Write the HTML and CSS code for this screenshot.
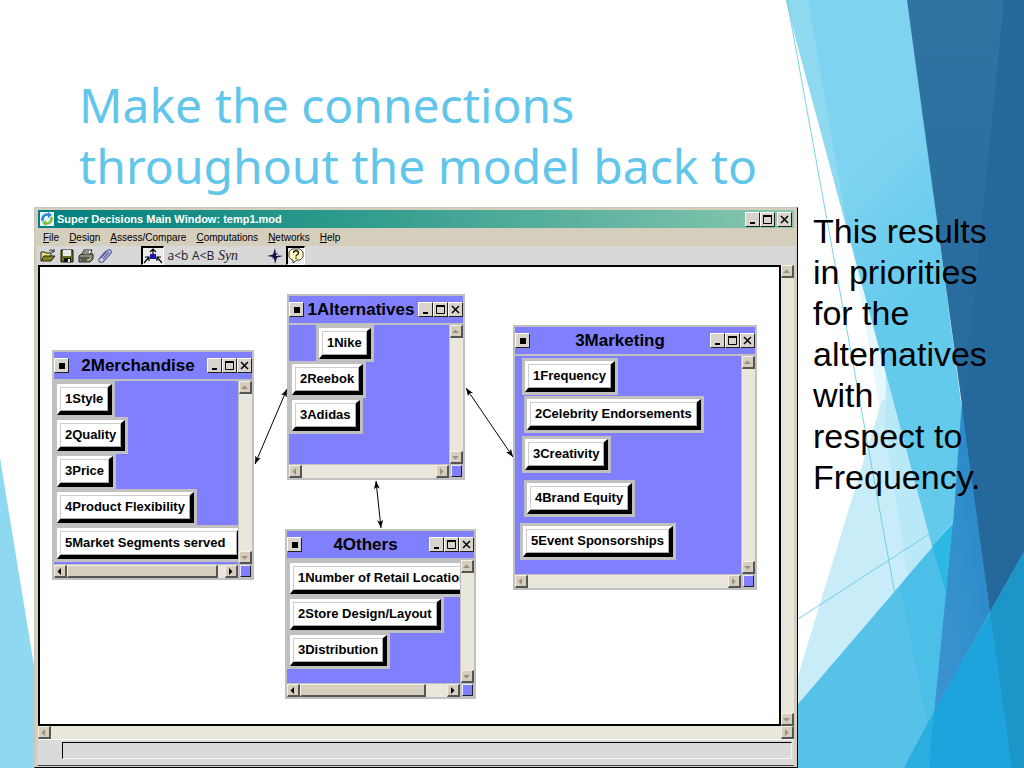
FILE: index.html
```html
<!DOCTYPE html>
<html lang="en">
<head>
  <meta charset="UTF-8" />
  <meta name="viewport" content="width=device-width, initial-scale=1.0" />
  <title>Super Decisions - Make the connections</title>
  <link rel="stylesheet" href="styles.css">
</head>
<body>
  <!-- shared glyphs -->
  <svg class="defs" width="0" height="0" aria-hidden="true">
    <symbol id="min" viewBox="0 0 13 13"><path d="M4 10h5" stroke="#000" stroke-width="2"/></symbol>
    <symbol id="max" viewBox="0 0 13 13"><path d="M2.500 2.500h8v8h-8z" fill="none" stroke="#000"/><path d="M2 3h9" stroke="#000" stroke-width="2"/></symbol>
    <symbol id="close" viewBox="0 0 13 13"><path d="M3 3l7 7M10 3l-7 7" stroke="#000" stroke-width="1.500"/></symbol>
    <symbol id="sys" viewBox="0 0 13 13"><path d="M4 4h6v6H4z"/></symbol>
    <symbol id="up" viewBox="0 0 9 9"><path d="M1 6l3.500-3.500L8 6z"/></symbol>
    <symbol id="down" viewBox="0 0 9 9"><path d="M1 3l3.500 3.500L8 3z"/></symbol>
    <symbol id="left" viewBox="0 0 9 9"><path d="M6 1L2.500 4.500 6 8z"/></symbol>
    <symbol id="right" viewBox="0 0 9 9"><path d="M3 1l3.500 3.500L3 8z"/></symbol>
  </svg>

  <div class="slide">
    <svg class="backdrop" viewBox="0 0 1024 768" preserveAspectRatio="none" aria-hidden="true">
      <defs>
        <linearGradient id="sky" x1="0" y1="0" x2="0.300" y2="1">
          <stop offset="0.400" stop-color="#7dd3f0"/>
          <stop offset="0.700" stop-color="#64caec"/>
        </linearGradient>
        <linearGradient id="mid" x1="1" y1="0" x2="0" y2="1">
          <stop offset="0" stop-color="#2888c8"/>
          <stop offset="1" stop-color="#3c94d0"/>
        </linearGradient>
        <linearGradient id="navy" x1="0" y1="0" x2="0" y2="1">
          <stop offset="0" stop-color="#3074a2"/>
          <stop offset="1" stop-color="#21659a"/>
        </linearGradient>
      </defs>
      <path d="M0 458L34 666 47 768H0z" fill="#8ed8f1"/>
      <path d="M847 220L893 400 872 440 880 410z" fill="#e6f7fd"/>
      <path d="M882 400L798 676V704L954 522 893 400z" fill="#c8edf9"/>
      <path d="M886 372L893 400 932 546 908 578 885 430z" fill="#b9e8f7"/>
      <path d="M786 0H908L962 410 953 522 932 546 893 400 797 43z" fill="url(#sky)"/>
      <path d="M786 0H808L848 233 797 43z" fill="#90daf1"/>
      <path d="M954 522L798 704V768H906L936 712z" fill="#56c2ea"/>
      <path d="M954 522L932 546 946 592z" fill="#2bb8e2"/>
      <path d="M954 522L932 546 946 592 936 712 928 728 900 586 906 578z" fill="#42bce6" opacity="0.500"/>
      <path d="M962 400L990 612 934 714 953 522z" fill="url(#mid)"/>
      <path d="M907 0H1024V552L990 612z" fill="url(#navy)"/>
      <path d="M1004 0H1024V552L990 612 963 415z" fill="#24689c"/>
      <path d="M1024 552L990 612 934 712 904 768H1024z" fill="#1ea4dd"/>
      <path d="M1024 552L990 612 1012 768H1024z" fill="#1c95c8"/>
      <path d="M934 712L904 768H929z" fill="#2cade0"/>
      <path d="M787 0L920 732M798 619L954 518" fill="none" stroke="#5cc6dc" stroke-width="0.800"/>
    </svg>

    <h1>Make the connections<br>throughout the model back to</h1>

    <div class="content">
      <div class="window">
        <div class="titlebar">
          <svg class="logo" viewBox="0 0 14 14"><path d="M0 0h14v14H0z" fill="#e8f4f8"/><path d="M3 9a4.500 4.500 0 0 1 6-6" fill="none" stroke="#2a86d0" stroke-width="2.500"/><path d="M11 5a4.500 4.500 0 0 1-6 6" fill="none" stroke="#7cc142" stroke-width="2.500"/><path d="M8 0l4 3-4 3z" fill="#2a86d0"/><path d="M6 14l-4-3 4-3z" fill="#7cc142"/></svg>
          <span>Super Decisions Main Window: temp1.mod</span>
          <div class="controls">
            <button aria-label="Minimize"><svg><use href="#min"/></svg></button>
            <button aria-label="Maximize"><svg><use href="#max"/></svg></button>
            <button aria-label="Close" class="apart"><svg><use href="#close"/></svg></button>
          </div>
        </div>

        <div class="menu">
          <button><u>F</u>ile</button>
          <button><u>D</u>esign</button>
          <button><u>A</u>ssess/Compare</button>
          <button><u>C</u>omputations</button>
          <button><u>N</u>etworks</button>
          <button><u>H</u>elp</button>
        </div>

        <div class="toolbar">
          <div class="tools">
            <button aria-label="Open"><svg viewBox="0 0 16 16"><path d="M1 13V4h4l1 1h5v3" fill="#e8e070" stroke="#222"/><path d="M1 13l3-5h11l-4 5z" fill="#8a8420" stroke="#222"/><path d="M9 3c2-2 4-1 5 1M14 1v3h-3" fill="none" stroke="#222"/></svg></button>
            <button aria-label="Save"><svg viewBox="0 0 16 16"><path d="M2 2h12v12H2z" fill="#6a6a20" stroke="#111"/><path d="M4 2h8v6H4z" fill="#e8e8e8"/><path d="M5 10h7v4H5z" fill="#111"/><path d="M9 11h2v3H9z" fill="#eee"/></svg></button>
            <button aria-label="Print"><svg viewBox="0 0 16 16"><path d="M4 7l2-5h8l-2 5" fill="#fff" stroke="#222"/><path d="M1 8l2-2h12v5l-3 3H1z" fill="#8a8a78" stroke="#222"/><path d="M2 10h9M6 4h5M3 12h6" stroke="#222"/><path d="M9 11h3v1H9z" fill="#e8e040"/></svg></button>
            <button aria-label="Attach"><svg viewBox="0 0 16 16"><path d="M4 10l7-8c2-1 4 1 3 3l-8 9c-2 1-5 0-4-3l7-8M6 11l6-7" fill="none" stroke="#5a62a8" stroke-width="1.300"/></svg></button>
          </div>
          <div class="tools">
            <button class="pressed wide" aria-label="Connections"><svg viewBox="0 0 20 16"><path d="M10 8V1M7 4l3-3 3 3M1 15l5-6M2 9h4v4M19 15l-5-6M18 9h-4v4" fill="none" stroke="#000" stroke-width="1.200"/><path d="M7 6h6v5H7z" fill="#1818b0"/></svg></button>
            <button class="word">a&lt;b</button>
            <button class="word">A&lt;B</button>
            <button class="word syn">Syn</button>
          </div>
          <div class="tools">
            <button aria-label="Compass"><svg viewBox="0 0 16 16"><path d="M8 0l1 6 2-1-1 2 6 1-6 1.500L8 16 7 10l-2 1 1-2-6-1 6-1.500z" fill="#10104a"/><path d="M9 7h5L9 8z" fill="#fff"/></svg></button>
            <button class="pressed" aria-label="Help"><svg viewBox="0 0 16 16"><path d="M4 1h8l3 3v5l-3 3H9l-4 3v-3H4L1 9V4z" fill="#fffbc0" stroke="#444"/><path d="M5.500 5c0-3 5-3 5 0 0 2-2.500 1.500-2.500 3.500M8 9.500v1.500" fill="none" stroke="#222" stroke-width="1.400"/></svg></button>
          </div>
        </div>

        <div class="workspace">
          <div class="canvas">
            <svg class="links" aria-hidden="true">
              <defs>
                <marker id="arrow" viewBox="0 0 8 6" refX="8" refY="3" markerWidth="8" markerHeight="6" orient="auto-start-reverse"><path d="M0 0l8 3-8 3 2-3z"/></marker>
              </defs>
              <line x1="247" y1="122" x2="215" y2="197"/>
              <line x1="426" y1="121" x2="473" y2="190"/>
              <line x1="336" y1="214" x2="341" y2="261"/>
            </svg>

            <section class="cluster merchandise">
              <header>
                <button aria-label="Menu"><svg><use href="#sys"/></svg></button>
                <h2>2Merchandise</h2>
                <div class="controls">
                  <button aria-label="Minimize"><svg><use href="#min"/></svg></button>
                  <button aria-label="Maximize"><svg><use href="#max"/></svg></button>
                  <button aria-label="Close"><svg><use href="#close"/></svg></button>
                </div>
              </header>
              <div class="nodes">
                <button class="node">1Style</button>
                <button class="node">2Quality</button>
                <button class="node">3Price</button>
                <button class="node">4Product Flexibility</button>
                <button class="node long">5Market Segments served</button>
              </div>
              <div class="vscroll">
                <button aria-label="Scroll up"><svg><use href="#up"/></svg></button>
                <button aria-label="Scroll down"><svg><use href="#down"/></svg></button>
              </div>
              <div class="hscroll live">
                <button aria-label="Scroll left"><svg><use href="#left"/></svg></button>
                <div class="thumb wide"></div>
                <button aria-label="Scroll right"><svg><use href="#right"/></svg></button>
              </div>
              <div class="grip"></div>
            </section>

            <section class="cluster alternatives">
              <header>
                <button aria-label="Menu"><svg><use href="#sys"/></svg></button>
                <h2>1Alternatives</h2>
                <div class="controls">
                  <button aria-label="Minimize"><svg><use href="#min"/></svg></button>
                  <button aria-label="Maximize"><svg><use href="#max"/></svg></button>
                  <button aria-label="Close"><svg><use href="#close"/></svg></button>
                </div>
              </header>
              <div class="nodes">
                <button class="node indent">1Nike</button>
                <button class="node">2Reebok</button>
                <button class="node">3Adidas</button>
              </div>
              <div class="vscroll">
                <button aria-label="Scroll up"><svg><use href="#up"/></svg></button>
                <button aria-label="Scroll down"><svg><use href="#down"/></svg></button>
              </div>
              <div class="hscroll">
                <button aria-label="Scroll left"><svg><use href="#left"/></svg></button>
                <button aria-label="Scroll right"><svg><use href="#right"/></svg></button>
              </div>
              <div class="grip"></div>
            </section>

            <section class="cluster marketing">
              <header>
                <button aria-label="Menu"><svg><use href="#sys"/></svg></button>
                <h2>3Marketing</h2>
                <div class="controls">
                  <button aria-label="Minimize"><svg><use href="#min"/></svg></button>
                  <button aria-label="Maximize"><svg><use href="#max"/></svg></button>
                  <button aria-label="Close"><svg><use href="#close"/></svg></button>
                </div>
              </header>
              <div class="nodes free">
                <button class="node frequency">1Frequency</button>
                <button class="node celebrity">2Celebrity Endorsements</button>
                <button class="node creativity">3Creativity</button>
                <button class="node brand">4Brand Equity</button>
                <button class="node event">5Event Sponsorships</button>
              </div>
              <div class="vscroll">
                <button aria-label="Scroll up"><svg><use href="#up"/></svg></button>
                <button aria-label="Scroll down"><svg><use href="#down"/></svg></button>
              </div>
              <div class="hscroll">
                <button aria-label="Scroll left"><svg><use href="#left"/></svg></button>
                <button aria-label="Scroll right"><svg><use href="#right"/></svg></button>
              </div>
              <div class="grip"></div>
            </section>

            <section class="cluster others">
              <header>
                <button aria-label="Menu"><svg><use href="#sys"/></svg></button>
                <h2>4Others</h2>
                <div class="controls">
                  <button aria-label="Minimize"><svg><use href="#min"/></svg></button>
                  <button aria-label="Maximize"><svg><use href="#max"/></svg></button>
                  <button aria-label="Close"><svg><use href="#close"/></svg></button>
                </div>
              </header>
              <div class="nodes">
                <button class="node">1Number of Retail Locations</button>
                <button class="node">2Store Design/Layout</button>
                <button class="node">3Distribution</button>
              </div>
              <div class="vscroll">
                <button aria-label="Scroll up"><svg><use href="#up"/></svg></button>
                <button aria-label="Scroll down"><svg><use href="#down"/></svg></button>
              </div>
              <div class="hscroll live">
                <button aria-label="Scroll left"><svg><use href="#left"/></svg></button>
                <div class="thumb"></div>
                <button aria-label="Scroll right"><svg><use href="#right"/></svg></button>
              </div>
              <div class="grip"></div>
            </section>
          </div>
          <div class="vscroll">
            <button aria-label="Scroll up"><svg><use href="#up"/></svg></button>
            <button aria-label="Scroll down"><svg><use href="#down"/></svg></button>
          </div>
          <div class="hscroll">
            <button aria-label="Scroll left"><svg><use href="#left"/></svg></button>
            <button aria-label="Scroll right"><svg><use href="#right"/></svg></button>
          </div>
        </div>

        <div class="statusbar"><div class="status"></div></div>
      </div>

      <p class="note">This results in priorities for the alternatives with respect to Frequency.</p>
    </div>
  </div>
</body>
</html>
```
FILE: styles.css
```css
* {
  box-sizing: border-box;
}
body {
  margin: 0;
  font-family: "Liberation Sans", Arial, sans-serif;
  background: #fff;
  color: #000;
}
button {
  padding: 0;
  margin: 0;
  font: inherit;
  color: inherit;
}
svg {
  display: block;
}
.defs {
  position: absolute;
}
.slide {
  position: relative;
  min-height: 100vh;
  display: flex;
  flex-direction: column;
  overflow: hidden;
}
.backdrop {
  position: absolute;
  top: 0;
  left: 0;
  width: 100%;
  height: 100%;
}
h1 {
  position: relative;
  margin: 0;
  padding: 74px 0 11px 79px;
  font-family: "Noto Sans", "Trebuchet MS", sans-serif;
  font-size: 48px;
  font-weight: 400;
  line-height: 61px;
  color: #62c6ea;
}
.content {
  position: relative;
  flex: 1;
  display: flex;
  padding-left: 34px;
}
.note {
  width: 226px;
  margin: 0;
  padding: 4px 32px 0 15px;
  font-size: 34px;
  line-height: 41px;
}

/* main window */
.window {
  flex: 1;
  min-width: 0;
  display: flex;
  flex-direction: column;
  padding: 2px 2px 1px;
  background: #d6cebd;
  border: 1px solid #c8c4b8;
  border-right-color: #000;
  border-bottom-color: #000;
}
.titlebar {
  display: flex;
  align-items: center;
  gap: 3px;
  height: 18px;
  margin: 0 1px;
  padding: 0 2px;
  background: linear-gradient(90deg, #008080, #2d9a8c 40%, #88c8b0);
  color: #fff;
  font-size: 11px;
  font-weight: bold;
}
.logo {
  width: 14px;
  height: 14px;
}
.controls {
  display: flex;
  margin-left: auto;
}
.controls button, .cluster header > button {
  width: 15px;
  height: 15px;
  background: #d8d4cc;
  border: 1px solid #fff;
  border-right-color: #222;
  border-bottom-color: #222;
}
.controls svg, .cluster header svg {
  width: 13px;
  height: 13px;
}
.titlebar .apart {
  margin-left: 2px;
}
.menu {
  display: flex;
  align-items: center;
  gap: 10px;
  height: 18px;
  padding-left: 6px;
  font-size: 10px;
}
.menu button, .tools button {
  background: none;
  border: none;
}
.toolbar {
  display: flex;
  align-items: center;
  gap: 28px;
  height: 19px;
  padding-left: 3px;
  background: #d8d8d8;
}
.tools {
  display: flex;
  align-items: center;
  gap: 3px;
}
.tools svg {
  width: 16px;
  height: 16px;
}
.tools .word {
  width: 22px;
  font-family: "Open Sans", sans-serif;
  font-size: 12px;
  line-height: 16px;
  color: #222;
}
.tools .syn {
  font-family: "Liberation Serif", serif;
  font-style: italic;
  font-size: 14px;
}
.tools .pressed {
  background: #ececec;
  border: 1px solid #fff;
  border-top: 2px solid #000;
  border-left: 2px solid #000;
}
.pressed.wide svg {
  width: 20px;
}

.workspace {
  flex: 1;
  display: grid;
  grid-template-columns: 1fr 13px;
  grid-template-rows: minmax(461px, 1fr) 13px;
  padding: 0 1px;
}
.canvas {
  position: relative;
  overflow: hidden;
  background: #fff;
  border: 2px solid #000;
}
.statusbar {
  height: 27px;
  margin: 0 1px;
  padding: 2px 2px 6px 24px;
  background: #dadada;
  border-top: 1px solid #fff;
  border-bottom: 1px solid #444;
}
.status {
  height: 100%;
  border: 1px solid #f4f4f4;
  border-top-color: #000;
  border-left-color: #000;
}

/* scroll bars */
.vscroll, .hscroll {
  display: flex;
  justify-content: space-between;
  background: #e9e6dc;
}
.vscroll {
  flex-direction: column;
}
.hscroll {
  grid-column: 1 / 3;
}
.vscroll button, .hscroll button {
  flex: none;
  width: 13px;
  height: 13px;
  background: #d6cebd;
  border: 1px solid #f4f0e4;
  border-right: 2px solid #555;
  border-bottom: 2px solid #555;
  fill: #9a917c;
}
.vscroll svg, .hscroll svg {
  width: 9px;
  height: 9px;
}
.hscroll.live button {
  fill: #000;
}
.thumb {
  width: 126px;
  margin-right: auto;
  background: #d6cebd;
  border: 1px solid #f4f0e4;
  border-right: 2px solid #555;
  border-bottom: 2px solid #555;
}
.thumb.wide {
  width: 151px;
}

/* clusters on the canvas */
.links {
  position: absolute;
  width: 100%;
  height: 100%;
}
.links line {
  stroke: #000;
  marker-start: url(#arrow);
  marker-end: url(#arrow);
}
.cluster {
  position: absolute;
  display: grid;
  grid-template-columns: minmax(0, 1fr) 13px;
  grid-template-rows: 29px minmax(0, 1fr) 14px;
  background: #c0c0c0;
  border: 2px solid #c0c0c0;
}
.merchandise {
  left: 12px;
  top: 83px;
  width: 202px;
  height: 230px;
}
.alternatives {
  left: 247px;
  top: 27px;
  width: 178px;
  height: 186px;
}
.marketing {
  left: 473px;
  top: 58px;
  width: 244px;
  height: 265px;
}
.others {
  left: 245px;
  top: 262px;
  width: 191px;
  height: 170px;
}
.cluster header {
  grid-column: 1 / 3;
  display: flex;
  align-items: center;
  margin-bottom: 2px;
  background: #8080ff;
}
.cluster h2 {
  flex: 1;
  margin: 0;
  font-size: 17px;
  line-height: 20px;
  text-align: center;
  white-space: nowrap;
}
.nodes {
  position: relative;
  display: flex;
  flex-direction: column;
  align-items: flex-start;
  overflow: hidden;
  margin-right: 1px;
  background: #8080ff;
}
.node {
  flex: none;
  height: 31px;
  margin: 3px 3px 2px;
  padding: 0 5px;
  background: #fff;
  border: 3px solid #fff;
  border-right: 4px solid #000;
  border-bottom: 4px solid #000;
  outline: 3px solid #c0c0c0;
  box-shadow: inset 1px 1px #ccc, inset -1px -1px #aaa;
  font-size: 13px;
  font-weight: bold;
  line-height: 22px;
  white-space: nowrap;
}
.node.long {
  min-width: 100%;
  text-align: left;
}
.node.indent {
  margin-left: 30px;
}
.free .node {
  position: absolute;
}
.frequency {
  left: 7px;
  top: 2px;
}
.celebrity {
  left: 9px;
  top: 40px;
}
.creativity {
  left: 7px;
  top: 80px;
}
.brand {
  left: 9px;
  top: 124px;
}
.event {
  left: 5px;
  top: 167px;
}
.grip {
  margin: 1px;
  background: #8080ff;
  border: 1px solid #e8e8ff;
  border-right-color: #222;
  border-bottom-color: #222;
}
.cluster .hscroll {
  grid-column: 1;
  margin-right: 1px;
  border-top: 1px solid #c0c0c0;
}
```
